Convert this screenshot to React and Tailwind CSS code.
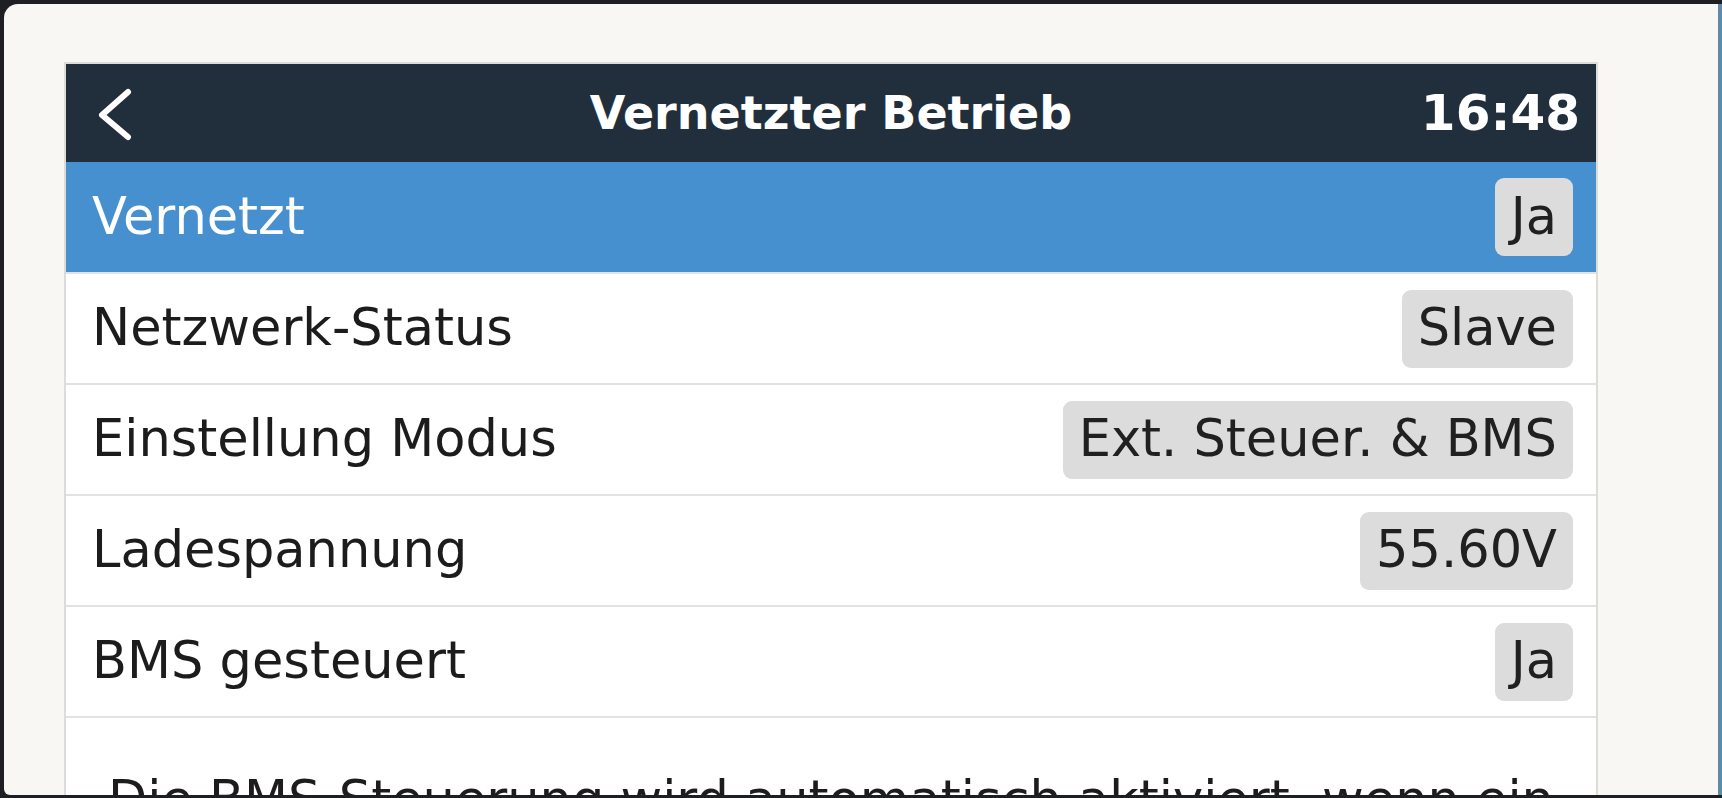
const rows = [
  { label: 'Netzwerk-Status', value: 'Slave' },
  { label: 'Einstellung Modus', value: 'Ext. Steuer. & BMS' },
  { label: 'Ladespannung', value: '55.60V' },
  { label: 'BMS gesteuert', value: 'Ja' },
]

function Badge({ children }) {
  return (
    <span className="flex h-[78px] items-center rounded-[9px] bg-[#dcdcdc] px-4 text-[#202020]">
      {children}
    </span>
  )
}

function BackIcon() {
  return (
    <svg width="40" height="56" viewBox="0 0 40 56" fill="none">
      <polyline
        points="34,5 8,28 34,50"
        stroke="#ffffff"
        strokeWidth="6"
        strokeLinecap="round"
        strokeLinejoin="round"
      />
    </svg>
  )
}

export default function App() {
  return (
    <div className="flex h-[798px] w-[1722px] overflow-hidden bg-[#1e1f22] pb-[3px] pl-1 pt-1 font-['DejaVu_Sans',sans-serif]">
      <div className="flex-1 overflow-hidden rounded-bl-[6px] rounded-tl-[14px] bg-[#f8f7f3] pl-[60px] pt-[58px]">
        <div className="w-[1534px] border-2 border-b-0 border-[#dcdcd8] bg-white">
          <header className="grid h-[98px] grid-cols-[1fr_auto_1fr] items-center bg-[#212f3d] text-white">
            <div className="pl-7 pt-1">
              <BackIcon />
            </div>
            <h1 className="text-[46px] font-bold">Vernetzter Betrieb</h1>
            <span className="justify-self-end pr-[16px] text-[50px] font-bold">16:48</span>
          </header>

          <div className="flex h-[110px] items-center justify-between bg-[#4790d0] pl-[26px] pr-[23px] text-[51px]">
            <span className="text-white">Vernetzt</span>
            <Badge>Ja</Badge>
          </div>

          {rows.map((row) => (
            <div
              key={row.label}
              className="flex h-[111px] items-center justify-between border-t-2 border-[#e2e2e2] pl-[26px] pr-[23px] text-[51px] text-[#1c1c1c]"
            >
              <span>{row.label}</span>
              <Badge>{row.value}</Badge>
            </div>
          ))}

          <div className="border-t-2 border-[#e2e2e2] px-6 pt-[52px] text-center text-[51px] leading-[60px] text-[#1c1c1c]">
            Die BMS-Steuerung wird automatisch aktiviert, wenn ein
          </div>
        </div>
      </div>
      <div className="w-1 bg-[#5f8aa8]" />
    </div>
  )
}
